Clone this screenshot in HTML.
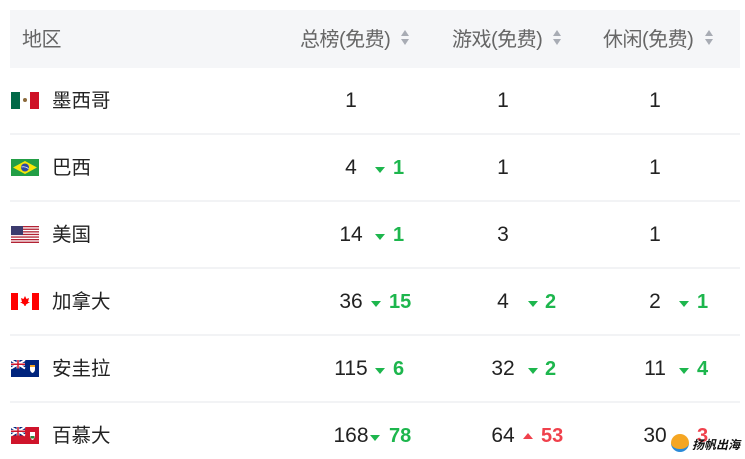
<!DOCTYPE html>
<html><head><meta charset="utf-8"><style>
*{margin:0;padding:0;box-sizing:border-box}
body{width:745px;height:459px;background:#fff;position:relative;overflow:hidden;font-family:"Liberation Sans","Noto Sans CJK SC",sans-serif;color:#222}
.hdr{position:absolute;left:10px;top:10px;width:730px;height:58px;background:#f5f6f8}
.h{position:absolute;top:26px;font-size:20px;color:#666;line-height:28px;letter-spacing:-0.5px}
.sort{position:absolute;top:30px;width:9px}
.sort i{display:block;width:0;height:0;border-left:4.5px solid transparent;border-right:4.5px solid transparent}
.sort .u{border-bottom:6px solid #a8acb4;margin-bottom:3px}
.sort .d{border-top:6px solid #a8acb4}
.line{position:absolute;left:10px;width:730px;height:2px;background:#f2f3f5}
.flag{position:absolute;left:11px;width:28px;height:17px;overflow:hidden}
.name{position:absolute;left:52px;font-size:19.5px;line-height:28px;color:#222}
.n{position:absolute;width:60px;text-align:center;font-size:21px;line-height:28px;color:#222}
.ar{position:absolute;width:0;height:0;border-left:5px solid transparent;border-right:5px solid transparent}
.dn{border-top:6px solid #1db64d}
.up{border-bottom:6px solid #f0414c}
.dv{position:absolute;font-size:20px;font-weight:bold;line-height:28px}
.g{color:#1db64d}.r{color:#f0414c}
</style></head><body>
<div class="hdr"></div>
<div class="h" style="left:22px">地区</div>
<div class="h" style="left:300px">总榜(免费)</div><div class="sort" style="left:401px"><i class="u"></i><i class="d"></i></div>
<div class="h" style="left:452px">游戏(免费)</div><div class="sort" style="left:553px"><i class="u"></i><i class="d"></i></div>
<div class="h" style="left:603px">休闲(免费)</div><div class="sort" style="left:705px"><i class="u"></i><i class="d"></i></div>

<div class="line" style="top:133px"></div>
<div class="line" style="top:200px"></div>
<div class="line" style="top:267px"></div>
<div class="line" style="top:334px"></div>
<div class="line" style="top:401px"></div>

<div class="flag" style="top:92px;display:flex"><div style="flex:1;background:#006847"></div><div style="flex:1;background:#fff;position:relative"><div style="position:absolute;left:3px;top:6px;width:4px;height:4px;border-radius:50%;background:#8c6a3c"></div></div><div style="flex:1;background:#ce1126"></div></div>
<div class="flag" style="top:159px;background:#229e45"><svg width="28" height="17"><polygon points="14,2 26,8.5 14,15 2,8.5" fill="#f8e509"/><circle cx="14" cy="8.5" r="4" fill="#2b49a3"/><path d="M10.5 8 Q14 7 17.5 9.5" stroke="#fff" stroke-width="0.8" fill="none"/></svg></div>
<div class="flag" style="top:226px"><svg width="28" height="17"><rect width="28" height="17" fill="#fff"/><g fill="#b22234"><rect y="0" width="28" height="1.3"/><rect y="2.6" width="28" height="1.3"/><rect y="5.2" width="28" height="1.3"/><rect y="7.8" width="28" height="1.3"/><rect y="10.4" width="28" height="1.3"/><rect y="13" width="28" height="1.3"/><rect y="15.6" width="28" height="1.4"/></g><rect width="12" height="9" fill="#3c3b6e"/></svg></div>
<div class="flag" style="top:293px"><svg width="28" height="17"><rect width="28" height="17" fill="#fff"/><rect width="7" height="17" fill="#f00"/><rect x="21" width="7" height="17" fill="#f00"/><path d="M14 3 L15.5 6 L18 5 L17 9 L19 9 L15 11.5 L14.5 13 L13.5 13 L13 11.5 L9 9 L11 9 L10 5 L12.5 6 Z" fill="#f00"/></svg></div>
<div class="flag" style="top:360px"><svg width="28" height="17"><rect width="28" height="17" fill="#00247d"/><path d="M0 0L14 8.5M14 0L0 8.5" stroke="#fff" stroke-width="2"/><path d="M7 0V8.5M0 4.25H14" stroke="#fff" stroke-width="2.8"/><path d="M7 0V8.5M0 4.25H14" stroke="#cf142b" stroke-width="1.5"/><path d="M19 5h5v4q0 3-2.5 4q-2.5-1-2.5-4z" fill="#fff"/><rect x="19" y="5" width="5" height="2" fill="#f5a623"/></svg></div>
<div class="flag" style="top:427px"><svg width="28" height="17"><rect width="28" height="17" fill="#cf142b"/><rect width="14" height="8.5" fill="#00247d"/><path d="M0 0L14 8.5M14 0L0 8.5" stroke="#fff" stroke-width="2"/><path d="M7 0V8.5M0 4.25H14" stroke="#fff" stroke-width="2.8"/><path d="M7 0V8.5M0 4.25H14" stroke="#cf142b" stroke-width="1.5"/><path d="M19 5h5v4q0 3-2.5 4q-2.5-1-2.5-4z" fill="#fff"/><rect x="19.5" y="9" width="4" height="2.5" fill="#2a8a3a"/></svg></div>

<div class="name" style="top:87px">墨西哥</div>
<div class="name" style="top:154px">巴西</div>
<div class="name" style="top:221px">美国</div>
<div class="name" style="top:288px">加拿大</div>
<div class="name" style="top:355px">安圭拉</div>
<div class="name" style="top:422px">百慕大</div>

<div class="n" style="left:321px;top:87px">1</div>
<div class="n" style="left:473px;top:87px">1</div>
<div class="n" style="left:625px;top:87px">1</div>

<div class="n" style="left:321px;top:154px">4</div><div class="ar dn" style="left:375px;top:167px"></div><div class="dv g" style="left:393px;top:154px">1</div>
<div class="n" style="left:473px;top:154px">1</div>
<div class="n" style="left:625px;top:154px">1</div>

<div class="n" style="left:321px;top:221px">14</div><div class="ar dn" style="left:375px;top:234px"></div><div class="dv g" style="left:393px;top:221px">1</div>
<div class="n" style="left:473px;top:221px">3</div>
<div class="n" style="left:625px;top:221px">1</div>

<div class="n" style="left:321px;top:288px">36</div><div class="ar dn" style="left:371px;top:301px"></div><div class="dv g" style="left:389px;top:288px">15</div>
<div class="n" style="left:473px;top:288px">4</div><div class="ar dn" style="left:528px;top:301px"></div><div class="dv g" style="left:545px;top:288px">2</div>
<div class="n" style="left:625px;top:288px">2</div><div class="ar dn" style="left:679px;top:301px"></div><div class="dv g" style="left:697px;top:288px">1</div>

<div class="n" style="left:321px;top:355px">115</div><div class="ar dn" style="left:375px;top:368px"></div><div class="dv g" style="left:393px;top:355px">6</div>
<div class="n" style="left:473px;top:355px">32</div><div class="ar dn" style="left:528px;top:368px"></div><div class="dv g" style="left:545px;top:355px">2</div>
<div class="n" style="left:625px;top:355px">11</div><div class="ar dn" style="left:679px;top:368px"></div><div class="dv g" style="left:697px;top:355px">4</div>

<div class="n" style="left:321px;top:422px">168</div><div class="ar dn" style="left:370px;top:435px"></div><div class="dv g" style="left:389px;top:422px">78</div>
<div class="n" style="left:473px;top:422px">64</div><div class="ar up" style="left:523px;top:433px"></div><div class="dv r" style="left:541px;top:422px">53</div>
<div class="n" style="left:625px;top:422px">30</div><div class="dv r" style="left:697px;top:422px">3</div>

<div style="position:absolute;left:671px;top:434px;width:18px;height:18px;border-radius:50%;background:#f5a623;border-bottom:3px solid #2a8ad8"></div>
<div style="position:absolute;left:692px;top:438px;font-size:12px;font-style:italic;font-weight:bold;color:#111;line-height:14px">扬帆出海</div>
</body></html>
